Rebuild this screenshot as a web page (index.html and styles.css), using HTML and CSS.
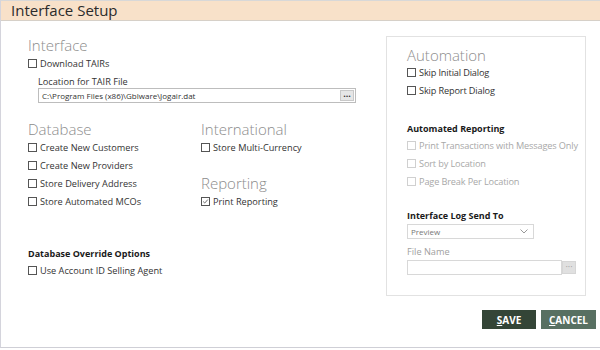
FILE: index.html
```html
<!DOCTYPE html>
<html lang="en">
<head>
    <meta charset="UTF-8" />
    <title>Interface Setup</title>
    <link rel="stylesheet" href="styles.css">
</head>
<body>
<div class="window">
    <div class="titlebar">Interface Setup</div>

    <div class="main">
        <div class="left">
            <div class="group">
                <h3>Interface</h3>
                <div class="check"><span class="box"></span>Download TAIRs</div>
                <div class="field">
                    <label>Location for TAIR File</label>
                    <div class="input wide">
                        <span>C:\Program Files (x86)\Gblware\Jogair.dat</span>
                        <span class="dots">&middot;&middot;&middot;</span>
                    </div>
                </div>
            </div>

            <div class="columns">
                <div class="group">
                    <h3>Database</h3>
                    <div class="check"><span class="box"></span>Create New Customers</div>
                    <div class="check"><span class="box"></span>Create New Providers</div>
                    <div class="check"><span class="box"></span>Store Delivery Address</div>
                    <div class="check"><span class="box"></span>Store Automated MCOs</div>
                </div>
                <div>
                    <div class="group">
                        <h3>International</h3>
                        <div class="check"><span class="box"></span>Store Multi-Currency</div>
                    </div>
                    <div class="group reporting">
                        <h3>Reporting</h3>
                        <div class="check"><span class="box checked">
                            <svg width="9" height="9" viewBox="0 0 9 9"><path d="M1.5 4.5 L3.5 6.5 L7.5 2" fill="none" stroke="#444" stroke-width="1"/></svg>
                        </span>Print Reporting</div>
                    </div>
                </div>
            </div>

            <div class="group override">
                <h4>Database Override Options</h4>
                <div class="check"><span class="box"></span>Use Account ID Selling Agent</div>
            </div>
        </div>

        <div class="panel">
            <h3>Automation</h3>
            <div class="check"><span class="box"></span>Skip Initial Dialog</div>
            <div class="check"><span class="box"></span>Skip Report Dialog</div>

            <h4 class="sub">Automated Reporting</h4>
            <div class="check disabled"><span class="box"></span>Print Transactions with Messages Only</div>
            <div class="check disabled"><span class="box"></span>Sort by Location</div>
            <div class="check disabled"><span class="box"></span>Page Break Per Location</div>

            <h4 class="sub log">Interface Log Send To</h4>
            <div class="select">
                <span>Preview</span>
                <svg width="8" height="5" viewBox="0 0 8 5"><path d="M0.5 0.5 L4 4 L7.5 0.5" fill="none" stroke="#999" stroke-width="1"/></svg>
            </div>
            <label class="muted">File Name</label>
            <div class="file-row">
                <div class="input file"></div>
                <span class="dots gray">&middot;&middot;&middot;</span>
            </div>
        </div>
    </div>

    <div class="footer">
        <button class="save"><u>S</u>AVE</button>
        <button class="cancel"><u>C</u>ANCEL</button>
    </div>
</div>
</body>
</html>
```

FILE: styles.css
```css
body {
  margin: 0;
  font-family: "Open Sans", Arial, sans-serif;
  background-color: #ffffff;
  color: #333;
}

.window {
  width: 600px;
  height: 348px;
  box-sizing: border-box;
  border-top: 1px solid #d8d8d8;
  border-left: 1px solid #d4d4dc;
  border-bottom: 1px solid #cfcfd6;
  display: flex;
  flex-direction: column;
}

.titlebar {
  height: 19px;
  line-height: 19px;
  padding-left: 10px;
  font-size: 15px;
  color: #2b2b2b;
  background-color: #f8e1c9;
  border-bottom: 1px solid #d6d0c8;
}

.main {
  display: flex;
  padding: 15px 0 0 27px;
}

.left {
  width: 358px;
}

h3 {
  margin: 0;
  font-size: 15px;
  font-weight: 300;
  line-height: 18px;
  color: #8c8c8c;
}

h4 {
  margin: 0;
  font-size: 9px;
  font-weight: 700;
  color: #1a1a1a;
}

.check {
  display: flex;
  align-items: center;
  height: 18px;
  font-size: 9.2px;
  color: #333;
  white-space: nowrap;
}

.box {
  width: 9px;
  height: 9px;
  border: 1px solid #555;
  box-sizing: border-box;
  margin-right: 3px;
  display: flex;
  align-items: center;
  justify-content: center;
  flex-shrink: 0;
}

.box svg {
  display: block;
}

.check.disabled {
  color: #a8a8a8;
}

.check.disabled .box {
  border-color: #d0d0d0;
}

.field {
  padding-left: 10px;
  margin-top: 3px;
}

label {
  display: block;
  font-size: 9.2px;
  color: #333;
  line-height: 13px;
}

.input {
  height: 15px;
  box-sizing: border-box;
  border: 1px solid #bdbdbd;
  display: flex;
  align-items: center;
  justify-content: space-between;
  font-size: 8px;
  padding: 0 1px 0 3px;
}

.input.wide {
  width: 318px;
}

.dots {
  width: 14px;
  height: 11px;
  line-height: 9px;
  text-align: center;
  font-size: 9px;
  font-weight: 700;
  background-color: #e6e6e6;
  border: 1px solid #c8c8c8;
  box-sizing: border-box;
  color: #333;
}

.dots.gray {
  color: #a0a0a0;
  font-weight: 400;
  height: 13px;
  background-color: #e0e0e0;
  border-color: #d6d6d6;
}

.columns {
  display: grid;
  grid-template-columns: 173px 1fr;
  margin-top: 17px;
}

.reporting {
  margin-top: 18px;
}

.override {
  margin-top: 37px;
}

.override h4 {
  margin-bottom: 1px;
}

.panel {
  width: 200px;
  height: 260px;
  box-sizing: border-box;
  border: 1px solid #e2e2e2;
  padding: 10px 0 0 20px;
  margin-top: 0;
}

.panel h3 {
  line-height: 16px;
}

.panel .check {
  letter-spacing: -0.15px;
}

.sub {
  margin-top: 23px;
  margin-bottom: 1px;
}

.sub.log {
  margin-top: 19px;
  margin-bottom: 2px;
}

.select {
  width: 127px;
  height: 15px;
  box-sizing: border-box;
  border: 1px solid #d8d8d8;
  display: flex;
  align-items: center;
  justify-content: space-between;
  padding: 0 5px 0 3px;
  font-size: 8px;
  color: #777;
}

.muted {
  color: #a0a0a0;
  margin-top: 4px;
  line-height: 17px;
}

.file-row {
  display: flex;
  align-items: center;
}

.input.file {
  width: 155px;
  border-color: #d8d8d8;
}

.footer {
  display: flex;
  justify-content: flex-end;
  gap: 5px;
  padding: 14px 4px 0 0;
}

button {
  height: 19px;
  width: 55px;
  border: none;
  color: #ffffff;
  font-family: "Open Sans", Arial, sans-serif;
  font-size: 10px;
  font-weight: 700;
  cursor: pointer;
  padding: 0;
}

button u {
  text-decoration-thickness: 1px;
}

.save {
  background-color: #344537;
  width: 54px;
}

.cancel {
  background-color: #587062;
}
```
